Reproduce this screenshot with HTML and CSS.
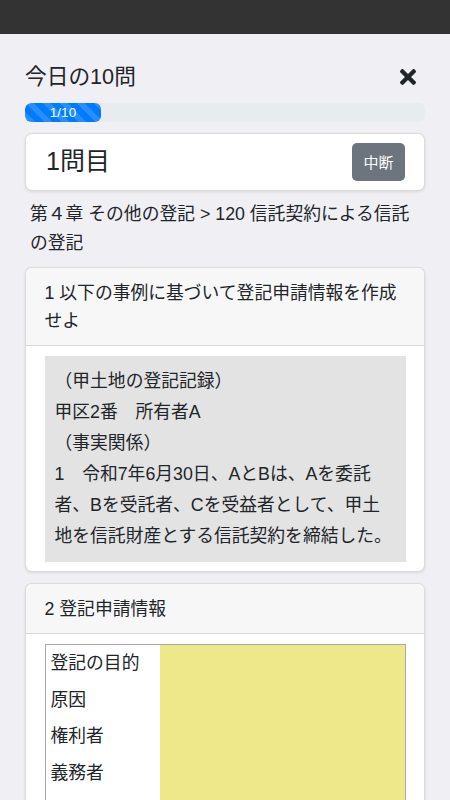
FILE: index.html
```html
<!DOCTYPE html>
<html lang="ja">
<head>
  <meta charset="UTF-8" />
  <meta name="viewport" content="width=device-width, initial-scale=1.0"/>
  <title>今日の10問</title>
  <link rel="stylesheet" href="styles.css">
</head>
<body>

  <div class="topbar"></div>

  <div class="page">
    <div class="title-row">
      <h1 class="title">今日の10問</h1>
      <button class="close-btn" aria-label="閉じる">
        <svg viewBox="0 80 352 352" aria-hidden="true">
          <path d="M242.72 256l100.07-100.07c12.28-12.28 12.28-32.19 0-44.48l-22.24-22.240c-12.28-12.28-32.19-12.28-44.48 0L176 189.28 75.93 89.21c-12.28-12.28-32.19-12.28-44.48 0L9.21 111.45c-12.28 12.28-12.28 32.19 0 44.48L109.28 256 9.21 356.07c-12.28 12.28-12.28 32.19 0 44.48l22.24 22.24c12.28 12.28 32.2 12.28 44.48 0L176 322.72l100.07 100.07c12.28 12.28 32.2 12.28 44.48 0l22.24-22.24c12.28-12.28 12.28-32.19 0-44.48L242.72 256z"/>
        </svg>
      </button>
    </div>

    <div class="progress">
      <div class="progress-bar" style="width: 19%">1/10</div>
    </div>

    <div class="card question-head">
      <div class="question-no">1問目</div>
      <button class="btn-stop">中断</button>
    </div>

    <p class="breadcrumb">第４章 その他の登記 &gt; 120 信託契約による信託<br>の登記</p>

    <div class="card">
      <div class="card-header">1 以下の事例に基づいて登記申請情報を作成<br>せよ</div>
      <div class="card-body">
        <div class="case-box">
          <p>（甲土地の登記記録）</p>
          <p>甲区2番　所有者A</p>
          <p>（事実関係）</p>
          <p>1　令和7年6月30日、AとBは、Aを委託<br>者、Bを受託者、Cを受益者として、甲土<br>地を信託財産とする信託契約を締結した。</p>
        </div>
      </div>
    </div>

    <div class="card">
      <div class="card-header">2 登記申請情報</div>
      <div class="card-body">
        <div class="answer-table">
          <div class="answer-labels">
            <div>登記の目的</div>
            <div>原因</div>
            <div>権利者</div>
            <div>義務者</div>
          </div>
          <div class="answer-area"></div>
        </div>
      </div>
    </div>
  </div>

</body>
</html>
```

FILE: styles.css
```css
body {
  margin: 0;
  font-family: "Liberation Sans", "Noto Sans CJK JP", sans-serif;
  font-size: 17.8px;
  color: #212529;
  background-color: #efeff4;
}

.topbar {
  height: 34px;
  background-color: #333;
}

.page {
  display: flex;
  flex-direction: column;
  padding: 30px 25px 20px;
}

.title-row {
  display: flex;
  align-items: center;
  justify-content: space-between;
  margin-bottom: 13px;
}

.title {
  margin: 0;
  font-size: 21.7px;
  font-weight: normal;
  line-height: 26px;
}

.close-btn {
  background: none;
  border: none;
  padding: 5px 9px;
  line-height: 0;
  cursor: pointer;
}

.close-btn svg {
  width: 16px;
  height: 16px;
  fill: #212529;
}

.progress {
  height: 19px;
  margin-bottom: 11px;
  background-color: #e9ecef;
  border-radius: 6px;
  overflow: hidden;
}

.progress-bar {
  height: 100%;
  background-color: #007bff;
  background-image: linear-gradient(45deg, rgba(255, 255, 255, 0.15) 25%, transparent 25%, transparent 50%, rgba(255, 255, 255, 0.15) 50%, rgba(255, 255, 255, 0.15) 75%, transparent 75%, transparent);
  background-size: 17px 17px;
  border-radius: 6px;
  color: white;
  font-size: 13.5px;
  line-height: 19px;
  text-align: center;
}

.card {
  background-color: white;
  border: 1px solid rgba(0, 0, 0, 0.14);
  border-radius: 7px;
  box-shadow: 0 1px 3px rgba(0, 0, 0, 0.1);
  margin-bottom: 11px;
  overflow: hidden;
}

.question-head {
  display: flex;
  align-items: center;
  justify-content: space-between;
  padding: 9px 19px 9px 20px;
  margin-bottom: 9px;
}

.question-no {
  font-size: 25px;
  line-height: 1;
}

.btn-stop {
  height: 37.5px;
  padding: 0 11.5px;
  border: none;
  border-radius: 5px;
  background-color: #6c757d;
  color: white;
  font-family: inherit;
  font-size: 15px;
  cursor: pointer;
}

.breadcrumb {
  margin: 0 0 8.5px;
  padding: 0 5px;
  line-height: 29.5px;
}

.card-header {
  padding: 10.5px 18.5px;
  line-height: 28px;
  background-color: #f7f7f7;
  border-bottom: 1px solid rgba(0, 0, 0, 0.13);
}

.card-body {
  padding: 10px 18.5px 9px;
}

.case-box {
  padding: 10px;
  background-color: #e3e3e3;
  line-height: 31px;
}

.case-box p {
  margin: 0;
}

.answer-table {
  display: flex;
  min-height: 200px;
  border: 1px solid #a9a9a9;
}

.answer-labels {
  width: 104px;
  padding: 0 5px;
  line-height: 36.5px;
}

.answer-area {
  flex: 1;
  background-color: #eee88b;
}
```
